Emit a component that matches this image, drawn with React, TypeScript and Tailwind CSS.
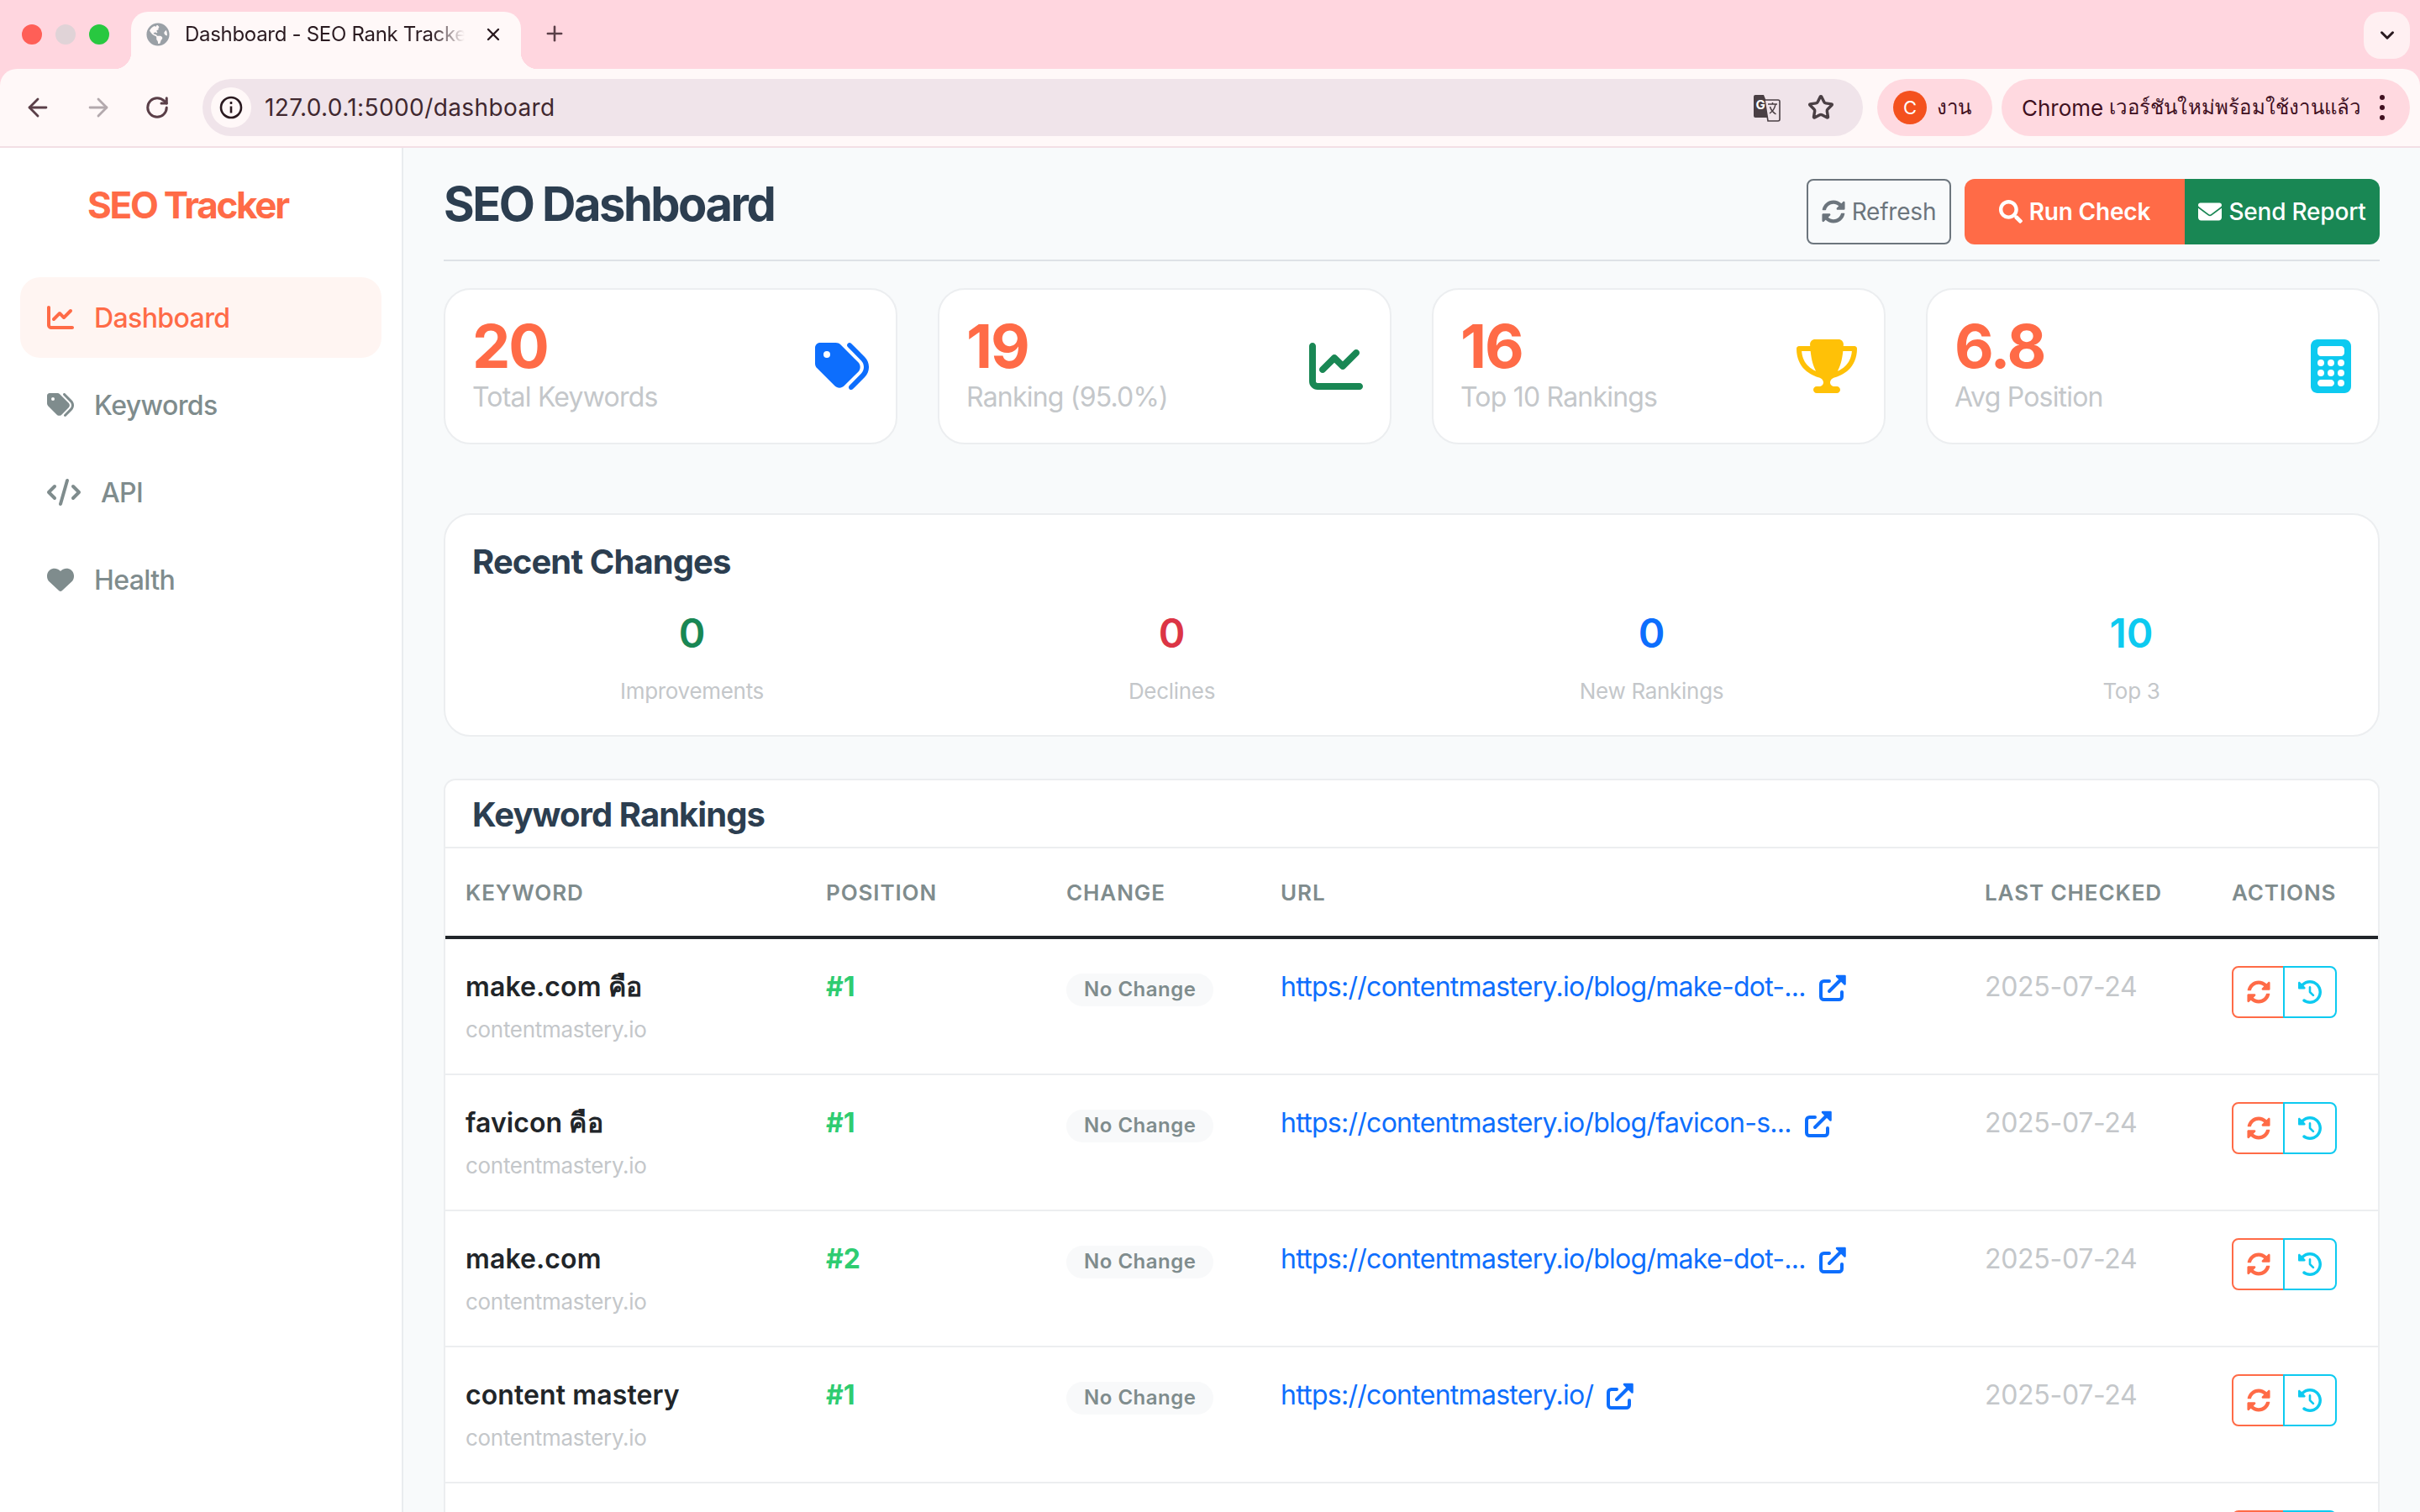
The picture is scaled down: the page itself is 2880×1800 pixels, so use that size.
import React from "react";
import { ArrowLeft, ArrowRight, RotateCw, Star, Plus, X, ChevronDown } from "lucide-react";
import { FaGlobeAmericas, FaSyncAlt, FaSearch } from "react-icons/fa";
import {
  FaChartLine, FaTags, FaCode, FaHeart, FaEnvelope,
  FaTrophy, FaCalculator, FaClockRotateLeft,
} from "react-icons/fa6";

const rows = [
  { k: "make.com คือ", p: "#1", u: "https://contentmastery.io/blog/make-dot-..." },
  { k: "favicon คือ", p: "#1", u: "https://contentmastery.io/blog/favicon-s..." },
  { k: "make.com", p: "#2", u: "https://contentmastery.io/blog/make-dot-..." },
  { k: "content mastery", p: "#1", u: "https://contentmastery.io/" },
];

const stats = [
  { n: "20", l: "Total Keywords", i: <FaTags className="h-[64px] w-[64px] text-[#0d6efd]" /> },
  { n: "19", l: "Ranking (95.0%)", i: <FaChartLine className="h-[64px] w-[64px] text-[#198754]" /> },
  { n: "16", l: "Top 10 Rankings", i: <FaTrophy className="h-[64px] w-[72px] text-[#ffc107]" /> },
  { n: "6.8", l: "Avg Position", i: <FaCalculator className="h-[64px] w-[48px] text-[#0dcaf0]" /> },
];

const changes = [
  { n: "0", l: "Improvements", c: "text-[#198754]" },
  { n: "0", l: "Declines", c: "text-[#dc3545]" },
  { n: "0", l: "New Rankings", c: "text-[#0d6efd]" },
  { n: "10", l: "Top 3", c: "text-[#0dcaf0]" },
];

const nav = [
  { t: "Dashboard", i: <FaChartLine className="h-[32px] w-[32px]" />, active: true },
  { t: "Keywords", i: <FaTags className="h-[32px] w-[32px]" /> },
  { t: "API", i: <FaCode className="h-[32px] w-[40px]" /> },
  { t: "Health", i: <FaHeart className="h-[32px] w-[32px]" /> },
];

const gridCols = "grid grid-cols-[429px_286px_255px_838px_294px_196px]";

function TranslateIcon() {
  return (
    <svg width="33" height="33" viewBox="0 0 33 33" className="text-[#4a3f44]">
      <path d="M1 3a2 2 0 0 1 2-2h10l2 5 5 22H3a2 2 0 0 1-2-2z" fill="currentColor" />
      <path d="M14 7h16a2 2 0 0 1 2 2v21a2 2 0 0 1-2 2H18z" fill="#f0e4ea" stroke="currentColor" strokeWidth="1.6" />
      <text x="3.5" y="18" fontSize="15" fontWeight="700" fill="#fff" fontFamily="Inter, sans-serif">G</text>
      <path d="M18 12h11M23.5 10v2M27 12c-1 6-4 9-7 11M20.5 15c1 4 4 7 7 9" fill="none" stroke="currentColor" strokeWidth="1.5" />
    </svg>
  );
}

function ExternalIcon() {
  return (
    <svg width="33" height="33" viewBox="0 0 33 33" className="shrink-0" fill="none" stroke="currentColor" strokeWidth="4" strokeLinecap="round" strokeLinejoin="round">
      <path d="M12 9H5.5A3.5 3.5 0 0 0 2 12.500V27.500A3.500 3.500 0 0 0 5.500 31h18a3.500 3.500 0 0 0 3.500-3.500V22" />
      <path d="M12 21L25 8" />
      <path d="M21 3h9.500v9.500z" fill="currentColor" strokeWidth="2.500" />
    </svg>
  );
}

function BrowserChrome() {
  return (
    <div className="shrink-0 bg-[#ffd6df]">
      <div className="flex h-[82px] items-start">
        <div className="flex w-[156px] shrink-0 items-center gap-[16px] pl-[26px] pt-[29px]">
          <span className="h-[24px] w-[24px] rounded-full bg-[#ff5f57]" />
          <span className="h-[24px] w-[24px] rounded-full bg-[#e0d3d7]" />
          <span className="h-[24px] w-[24px] rounded-full bg-[#28c840]" />
        </div>
        <div className="relative mt-[14px] flex h-[68px] w-[464px] items-center rounded-t-[20px] bg-[#fff8f8] pb-[14px] pl-[18px]">
          <span className="absolute bottom-0 left-[-20px] h-[20px] w-[20px] bg-[radial-gradient(circle_at_0_0,#ffd6df_20px,#fff8f8_20.5px)]" />
          <span className="absolute bottom-0 right-[-20px] h-[20px] w-[20px] bg-[radial-gradient(circle_at_100%_0,#ffd6df_20px,#fff8f8_20.5px)]" />
          <FaGlobeAmericas className="shrink-0 text-[28px] text-[#9aa0a6]" />
          <span className="ml-[18px] w-[333px] overflow-hidden whitespace-nowrap text-[24px] leading-[32px] tracking-[-0.3px] text-[#2a1a20] [mask-image:linear-gradient(to_right,#000_88%,transparent)]">
            Dashboard - SEO Rank Tracker
          </span>
          <X className="ml-[22px] shrink-0 text-[#2a1a20]" size={24} strokeWidth={2.4} />
        </div>
        <Plus className="ml-[26px] mt-[26px] text-[#5a3f48]" size={28} strokeWidth={2.2} />
        <div className="ml-auto mr-[12px] mt-[14px] flex h-[56px] w-[55px] items-center justify-center rounded-[20px] bg-[#fff0f2]">
          <ChevronDown className="text-[#2a1a20]" size={26} strokeWidth={2.8} />
        </div>
      </div>
      <div className="flex h-[92px] items-center rounded-t-[20px] bg-[#fff8f8] pl-[28px]">
        <ArrowLeft className="text-[#5a3f48]" size={34} strokeWidth={2} />
        <ArrowRight className="ml-[38px] text-[#b3a9ad]" size={34} strokeWidth={2} />
        <RotateCw className="ml-[38px] text-[#5a3f48]" size={30} strokeWidth={2.4} />
        <div className="ml-[39px] flex h-[68px] w-[1976px] items-center rounded-full bg-[#f0e4ea] pl-[10px] pr-[34px]">
          <span className="flex h-[48px] w-[48px] items-center justify-center rounded-full bg-[#fff8f8]">
            <svg width="30" height="30" viewBox="0 0 30 30" fill="none" stroke="#2a1a20" strokeWidth="2.6">
              <circle cx="15" cy="15" r="12" />
              <path d="M15 13.5v8M15 8v3" />
            </svg>
          </span>
          <span className="ml-[16px] text-[28px] leading-[36px] tracking-[0.4px] text-[#40282f]">127.0.0.1:5000/dashboard</span>
          <span className="ml-auto flex items-center gap-[32px]">
            <TranslateIcon />
            <Star className="text-[#4a3f44]" size={32} strokeWidth={2.6} />
          </span>
        </div>
        <div className="ml-[17px] flex h-[68px] w-[137px] items-center rounded-full bg-[#ffd9e0] pl-[19px]">
          <span className="flex h-[40px] w-[40px] items-center justify-center rounded-full bg-[#f4511e] text-[22px] text-white">C</span>
          <span className="ml-[12px] text-[24px] text-[#40101f]">งาน</span>
        </div>
        <div className="ml-[11px] flex h-[68px] w-[486px] items-center rounded-full bg-[#ffd9e0] pl-[24px]">
          <span className="whitespace-nowrap text-[26px] text-[#40101f]">Chrome</span>
          <span className="ml-[7px] whitespace-nowrap text-[24px] tracking-[0.2px] text-[#40101f]">เวอร์ชันใหม่พร้อมใช้งานแล้ว</span>
          <span className="ml-auto mr-[30px] flex flex-col gap-[6px]">
            <span className="h-[6px] w-[6px] rounded-full bg-[#40101f]" />
            <span className="h-[6px] w-[6px] rounded-full bg-[#40101f]" />
            <span className="h-[6px] w-[6px] rounded-full bg-[#40101f]" />
          </span>
        </div>
      </div>
      <div className="h-[2px] bg-[#f3dfe5]" />
    </div>
  );
}

function Sidebar() {
  return (
    <aside className="w-[480px] shrink-0 border-r-2 border-[#e9ecef] bg-white px-[24px]">
      <div className="h-[154px] pl-[80px] pt-[40px] text-[44px] font-bold leading-[56px] tracking-[-2.3px] text-[#ff6b47]">
        SEO Tracker
      </div>
      <nav className="flex flex-col gap-[8px]">
        {nav.map((n) => (
          <div
            key={n.t}
            className={
              n.active
                ? "flex h-[96px] items-center gap-[24px] rounded-[24px] bg-[#fff5f2] pl-[32px] text-[32px] font-medium tracking-[-0.6px] text-[#ff6b47]"
                : "flex h-[96px] items-center gap-[24px] rounded-[24px] pl-[32px] text-[32px] font-medium tracking-[-0.6px] text-[#7f8c8d]"
            }
          >
            {n.i}
            <span className="pt-[2px]">{n.t}</span>
          </div>
        ))}
      </nav>
    </aside>
  );
}

function StatCard({ n, l, i }: { n: string; l: string; i: React.ReactNode }) {
  return (
    <div className="flex h-[186px] items-center justify-between rounded-[32px] border-2 border-[#eceef0] bg-white px-[32px]">
      <div className="flex flex-col">
        <span className="text-[72px] font-bold leading-[72px] tracking-[-2px] text-[#ff6b47]">{n}</span>
        <span className="mt-[1px] text-[32px] leading-[48px] tracking-[-0.8px] text-[#c4c7ca]">{l}</span>
      </div>
      {i}
    </div>
  );
}

function Header() {
  return (
    <header className="flex items-center justify-between border-b-2 border-[#dee2e6] pb-[16px] pt-[34px]">
      <h1 className="mb-[16px] text-[56px] font-bold leading-[67px] tracking-[-2.5px] text-[#2c3e50]">SEO Dashboard</h1>
      <div className="flex items-center">
        <button className="mr-[16px] flex h-[78px] w-[172px] items-center justify-center gap-[8px] rounded-[8px] border-2 border-[#6c757d] text-[28px] tracking-[-0.2px] text-[#6c757d]">
          <FaSyncAlt className="h-[28px] w-[28px]" />
          Refresh
        </button>
        <button className="flex h-[78px] w-[262px] items-center justify-center gap-[8px] rounded-l-[12px] bg-[#ff6b47] text-[28px] font-semibold tracking-[-0.2px] text-white">
          <FaSearch className="h-[28px] w-[28px]" />
          Run Check
        </button>
        <button className="flex h-[78px] w-[232px] items-center justify-center gap-[8px] rounded-r-[12px] bg-[#198754] text-[28px] font-medium tracking-[-0.2px] text-white">
          <FaEnvelope className="h-[28px] w-[28px]" />
          Send Report
        </button>
      </div>
    </header>
  );
}

function RecentChanges() {
  return (
    <section className="mt-[82px] h-[266px] rounded-[32px] border-2 border-[#eceef0] bg-white px-[8px] pt-[32px]">
      <h2 className="px-[24px] text-[40px] font-bold leading-[48px] tracking-[-0.9px] text-[#2c3e50]">Recent Changes</h2>
      <div className="mt-[32px] grid grid-cols-4">
        {changes.map((c) => (
          <div key={c.l} className="flex flex-col items-center">
            <span className={`text-[48px] font-semibold leading-[58px] ${c.c}`}>{c.n}</span>
            <span className="mt-[20px] text-[26px] leading-[40px] tracking-[-0.3px] text-[#c4c7ca]">{c.l}</span>
          </div>
        ))}
      </div>
    </section>
  );
}

function ActionButtons() {
  return (
    <div className="-mt-[1px] flex pl-[24px]">
      <button className="flex h-[62px] w-[63px] items-center justify-center rounded-l-[8px] border-2 border-[#ff6b47] text-[#ff6b47]">
        <FaSyncAlt className="h-[28px] w-[28px]" />
      </button>
      <button className="-ml-[2px] flex h-[62px] w-[64px] items-center justify-center rounded-r-[8px] border-2 border-[#0dcaf0] text-[#0dcaf0]">
        <FaClockRotateLeft className="h-[28px] w-[28px]" />
      </button>
    </div>
  );
}

function Rankings() {
  return (
    <section className="mt-[50px] rounded-t-[14px] border-x-2 border-t-2 border-[#eceef0] bg-white">
      <h2 className="h-[81px] border-b-2 border-[#eceef0] px-[32px] pt-[17px] text-[40px] font-bold leading-[48px] tracking-[-0.95px] text-[#2c3e50]">
        Keyword Rankings
      </h2>
      <div className={`${gridCols} h-[108px] items-center border-b-4 border-[#212529] text-[26px] font-semibold tracking-[0.9px] text-[#7f8c8d]`}>
        <span className="pl-[24px]">KEYWORD</span>
        <span className="pl-[24px]">POSITION</span>
        <span className="pl-[24px]">CHANGE</span>
        <span className="pl-[24px]">URL</span>
        <span className="pl-[24px]">LAST CHECKED</span>
        <span className="pl-[24px]">ACTIONS</span>
      </div>
      {rows.map((r) => (
        <div key={r.k} className={`${gridCols} h-[162px] border-b-2 border-[#eceef0] pt-[33px] text-[32px] leading-[48px]`}>
          <div className="pl-[24px]">
            <div className="font-semibold tracking-[0.1px] text-[#212529]">{r.k}</div>
            <div className="mt-[6px] text-[26px] leading-[42px] tracking-[-0.3px] text-[#c4c7ca]">contentmastery.io</div>
          </div>
          <div className="pl-[24px] font-bold text-[#2ecc71]">{r.p}</div>
          <div className="pl-[24px]">
            <span className="mt-[7px] inline-flex h-[39px] items-center rounded-full bg-[#f8f9fa] px-[21px] text-[24px] font-semibold tracking-[0.5px] text-[#7f8c8d]">
              No Change
            </span>
          </div>
          <div className="flex h-[48px] items-center gap-[16px] pl-[24px] tracking-[-0.72px] text-[#0d6efd]">
            <span>{r.u}</span>
            <ExternalIcon />
          </div>
          <div className="pl-[24px] tracking-[-0.3px] text-[#c4c7ca]">2025-07-24</div>
          <ActionButtons />
        </div>
      ))}
      <div className={`${gridCols} h-[162px] pt-[33px]`}>
        <span />
        <span />
        <span />
        <span />
        <span />
        <ActionButtons />
      </div>
    </section>
  );
}

export default function App() {
  return (
    <div className="flex h-[1800px] w-[2880px] flex-col overflow-hidden bg-[#ffd6df] [font-family:Inter,'Noto_Sans',sans-serif]">
      <BrowserChrome />
      <div className="flex min-h-0 flex-1">
        <Sidebar />
        <main className="min-w-0 flex-1 overflow-hidden bg-[#f8fafb] px-[48px]">
          <Header />
          <div className="mt-[32px] grid grid-cols-4 gap-[48px]">
            {stats.map((s) => (
              <StatCard key={s.l} {...s} />
            ))}
          </div>
          <RecentChanges />
          <Rankings />
        </main>
      </div>
    </div>
  );
}
